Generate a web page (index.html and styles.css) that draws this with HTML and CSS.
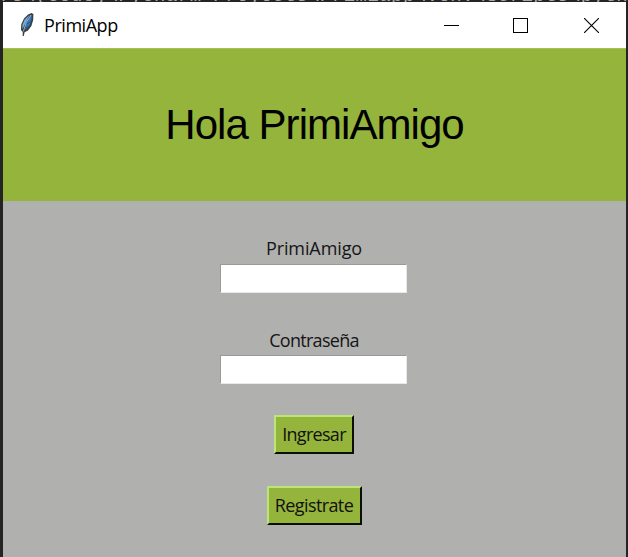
FILE: index.html
```html
<!DOCTYPE html>
<html lang="es">
<head>
<meta charset="utf-8">
<title>PrimiApp</title>
<link rel="stylesheet" href="styles.css">
</head>
<body>
<div class="backdrop" aria-hidden="true"><span>rs\(Code)\PyCharm Proyects\Primiapp\venv\Scripts\pytho</span></div>
<main class="window">
  <div class="titlebar">
    <svg class="feather" width="16" height="26" viewBox="0 0 16 26">
      <path d="M12.5 1 L14.4 2 L14.2 8 L12.4 14 L9 18.5 L5.6 20.3 L4.8 24 L3.7 24 L3.7 20 L2 18 L2.2 12.5 L5 6.5 L9 2.5 Z" fill="#3b4046"/>
      <path d="M11.7 3 L12.9 3 L12 10 L9.5 15 L6 17.5 L7.6 11 Z" fill="#3478bd"/>
      <path d="M10.5 3 L5.7 7.8 L3.4 13 L3.5 17 L7 10 Z" fill="#76aee4"/>
      <path d="M11.8 3.2 L7.3 10.5 L4.3 19.5" fill="none" stroke="#b9cfe0" stroke-width=".8"/>
      <path d="M12.5 9 L8.2 12 M10.8 13.5 L6.6 15.8" stroke="#204c80" stroke-width=".8"/>
    </svg>
    <span class="app-name">PrimiApp</span>
    <div class="controls">
      <svg width="15" height="15" viewBox="0 0 15 15"><path d="M0 7.5H15" stroke="#000"/></svg>
      <svg width="15" height="15" viewBox="0 0 15 15"><rect x=".5" y=".5" width="14" height="14" fill="none" stroke="#000"/></svg>
      <svg width="15" height="15" viewBox="0 0 15 15"><path d="M0 0L15 15M15 0L0 15" stroke="#000" stroke-width="1.1"/></svg>
    </div>
  </div>
  <header class="banner"><h1>Hola PrimiAmigo</h1></header>
  <form class="login">
    <label class="user-label" for="user">PrimiAmigo</label>
    <input id="user" type="text">
    <label class="pass-label" for="pass">Contraseña</label>
    <input id="pass" type="password">
    <button class="enter" type="button">Ingresar</button>
    <button class="register" type="button">Registrate</button>
  </form>
</main>
</body>
</html>
```

FILE: styles.css
```css
* { box-sizing: border-box; }
body {
  margin: 0;
  height: 557px;
  overflow: hidden;
  background: #242424;
  font-family: "Open Sans", "Noto Sans", sans-serif;
  color: #000;
}
.backdrop {
  height: 2px;
  overflow: hidden;
  color: #aaa;
  font: 19px/20px "Liberation Mono", monospace;
  letter-spacing: 0.45px;
  white-space: pre;
}
.backdrop span { display: block; margin-top: -14px; }
.window {
  width: 623px;
  height: 555px;
  margin-left: 3px;
  background: #b0b0ae;
}
.titlebar {
  display: flex;
  align-items: center;
  height: 46px;
  padding: 0 27px 0 16px;
  background: #fff;
}
.feather { margin-top: -1px; }
.app-name { margin-left: 9px; font-size: 18px; line-height: 24px; letter-spacing: -0.45px; }
.controls { display: flex; gap: 54px; margin-left: auto; }
.controls svg { display: block; }
.controls svg:last-child { margin-left: 2px; }
.banner {
  display: flex;
  align-items: center;
  justify-content: center;
  height: 153px;
  background: #95b43b;
  border-top: 1px solid #a5c055;
}
h1 {
  margin: 0;
  font: 400 42px/48px "Liberation Sans", Arial, sans-serif;
  letter-spacing: -0.95px;
}
.login {
  display: flex;
  flex-direction: column;
  align-items: center;
  padding: 35px 1px 0 0;
}
label {
  height: 24px;
  font-size: 18px;
  line-height: 24px;
  color: #151515;
}
.user-label { margin-bottom: 4px; letter-spacing: -0.1px; }
.pass-label { margin-bottom: 3px; letter-spacing: -0.7px; }
input {
  width: 187px;
  height: 29px;
  padding: 0 4px;
  background: #fff;
  border: 1px solid;
  border-color: #999 #e8e8e8 #e8e8e8 #999;
  border-radius: 0;
  outline: none;
}
#user { margin: 0 1px 35px 0; }
#pass { margin: 0 1px 31px 0; }
button {
  height: 39px;
  margin: 0 0 32px;
  padding: 0 0 1px;
  border: 2px solid;
  border-color: #b9e777 #0b0e02 #0b0e02 #b9e777;
  border-radius: 0;
  background: #95b43b;
  font: 18px/24px "Open Sans", "Noto Sans", sans-serif;
  color: #111;
}
.enter { width: 80px; letter-spacing: -0.7px; }
.register { width: 95px; letter-spacing: -0.6px; }
```
